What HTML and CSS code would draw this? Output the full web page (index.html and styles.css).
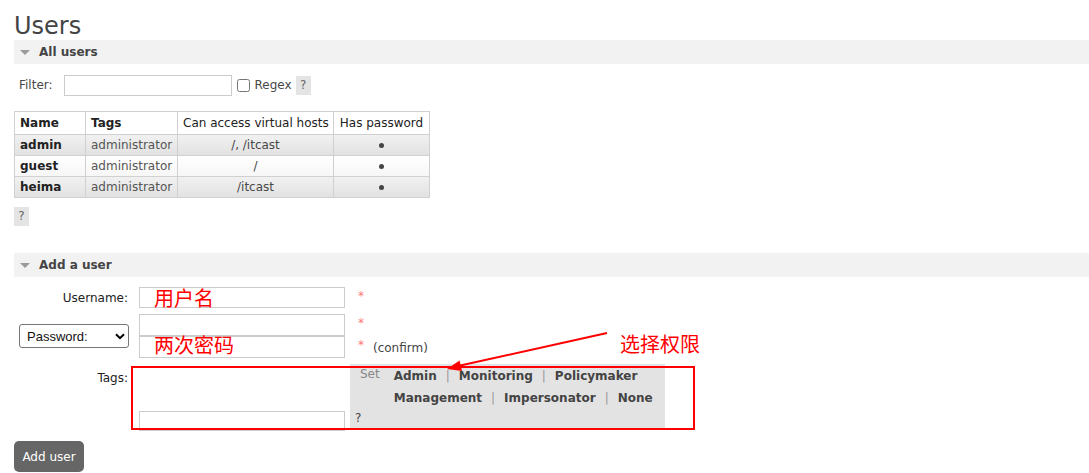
FILE: index.html
```html
<!DOCTYPE html>
<html lang="en">

<head>
    <meta charset="UTF-8">
    <title>Users</title>
    <link rel="stylesheet" href="styles.css">
</head>

<body>
    <div class="page">
        <h1>Users</h1>

        <div class="section">
            <h2 class="section-title"><span class="triangle"></span>All users</h2>
            <div class="filter">
                <label>Filter:</label>
                <input type="text" class="filter-input">
                <input type="checkbox" class="regex-check">
                <label class="regex-label">Regex</label>
                <span class="help">?</span>
            </div>

            <table class="list">
                <colgroup>
                    <col class="col-name">
                    <col class="col-tags">
                    <col class="col-vhosts">
                    <col class="col-pass">
                </colgroup>
                <thead>
                    <tr>
                        <th>Name</th>
                        <th>Tags</th>
                        <th class="c plain">Can access virtual hosts</th>
                        <th class="c plain">Has password</th>
                    </tr>
                </thead>
                <tbody>
                    <tr class="alt1">
                        <td class="user">admin</td>
                        <td class="tag">administrator</td>
                        <td class="c">/, /itcast</td>
                        <td class="c"><span class="dot"></span></td>
                    </tr>
                    <tr class="alt2">
                        <td class="user">guest</td>
                        <td class="tag">administrator</td>
                        <td class="c">/</td>
                        <td class="c"><span class="dot"></span></td>
                    </tr>
                    <tr class="alt1">
                        <td class="user">heima</td>
                        <td class="tag">administrator</td>
                        <td class="c">/itcast</td>
                        <td class="c"><span class="dot"></span></td>
                    </tr>
                </tbody>
            </table>
            <span class="help after-table">?</span>
        </div>

        <div class="section add-section">
            <h2 class="section-title"><span class="triangle"></span>Add a user</h2>
            <div class="user-form">
                <label class="form-label">Username:</label>
                <div class="field-line">
                    <input type="text" class="text-input">
                    <span class="req">*</span>
                </div>

                <div class="select-box">
                    <select>
                        <option>Password:</option>
                    </select>
                    <svg width="10" height="7" viewBox="0 0 10 7">
                        <path d="M1 1.2 L5 5.2 L9 1.2" fill="none" stroke="#000" stroke-width="2" />
                    </svg>
                </div>
                <div class="password-fields">
                    <div class="field-line">
                        <input type="password" class="text-input">
                        <span class="req">*</span>
                    </div>
                    <div class="field-line">
                        <input type="password" class="text-input">
                        <span class="req">*</span>
                        <span class="confirm">(confirm)</span>
                    </div>
                </div>

                <label class="form-label tags-label">Tags:</label>
                <div class="tags-cell">
                    <input type="text" class="text-input tags-input">
                    <div class="tag-help">
                        <div class="tag-set">
                            <span class="set-word">Set</span>
                            <span class="tag-links">
                                <span class="tag-link">Admin</span><span class="sep">|</span><span class="tag-link">Monitoring</span><span class="sep">|</span><span class="tag-link">Policymaker</span>
                                <span class="tag-link">Management</span><span class="sep">|</span><span class="tag-link">Impersonator</span><span class="sep">|</span><span class="tag-link">None</span>
                            </span>
                        </div>
                        <div class="tag-q">?</div>
                    </div>
                </div>
            </div>
            <button class="add-btn">Add user</button>
        </div>
    </div>

    <!-- red notes drawn over the screenshot -->
    <div class="note note-user">用户名</div>
    <div class="note note-pass">两次密码</div>
    <div class="note note-tags">选择权限</div>
    <div class="note-box"></div>
    <svg class="note-arrow" width="1089" height="473" viewBox="0 0 1089 473">
        <line x1="607" y1="333" x2="458" y2="366" stroke="#f00" stroke-width="2" />
        <polygon points="447,369 462,371 459.6,360.6" fill="#f00" />
    </svg>
</body>

</html>
```

FILE: styles.css
```css
body {
    margin: 0;
    font-family: "DejaVu Sans", Verdana, sans-serif;
    font-size: 12px;
    color: #484848;
    position: relative;
    overflow: hidden;
}

.page {
    padding-left: 14px;
}

h1 {
    margin: 13px 0 0 0;
    font-size: 24px;
    line-height: 27px;
    font-weight: normal;
    color: #444;
}

.section-title {
    margin: 0;
    height: 24px;
    display: flex;
    align-items: center;
    background-color: #f2f2f2;
    font-size: 12px;
    font-weight: bold;
    color: #444;
}

.triangle {
    width: 0;
    height: 0;
    border-left: 5px solid transparent;
    border-right: 5px solid transparent;
    border-top: 5px solid #9a9a9a;
    margin: 1px 9px 0 6px;
}

input {
    font-family: "DejaVu Sans", Verdana, sans-serif;
    font-size: 12px;
}

.filter {
    display: flex;
    align-items: center;
    height: 22px;
    margin: 10px 0 0 5px;
}

.filter-input {
    width: 168px;
    height: 21px;
    margin: 0 0 0 11px;
    border: 1px solid #ccc;
    box-sizing: border-box;
}

.regex-check {
    width: 13px;
    height: 13px;
    margin: 0 5px 0 5px;
}

.regex-label {
    margin-right: 4px;
}

.help {
    display: inline-block;
    width: 15px;
    height: 19px;
    line-height: 19px;
    text-align: center;
    background-color: #e4e4e4;
    color: #666;
}

.list {
    border-collapse: collapse;
    table-layout: fixed;
    width: 415px;
    margin-top: 15px;
}

.col-name { width: 71px; }
.col-tags { width: 92px; }
.col-vhosts { width: 156px; }
.col-pass { width: 96px; }

.list th,
.list td {
    border: 1px solid #d0d0d0;
    padding: 3px 5px;
    line-height: 14px;
    text-align: left;
    white-space: nowrap;
}

.list th {
    padding: 4px 5px;
    background-color: #fff;
    color: #222;
}

.list th.plain {
    font-weight: normal;
}

.list .c {
    text-align: center;
}

.list tr.alt1 {
    background: linear-gradient(#f1f1f1, #e1e1e1);
}

.list tr.alt2 {
    background: linear-gradient(#fff, #f6f6f6);
}

.list td.user {
    font-weight: bold;
    color: #222;
}

.list td.tag {
    color: #555;
}

.dot {
    display: inline-block;
    width: 5px;
    height: 5px;
    border-radius: 50%;
    background-color: #444;
    vertical-align: middle;
}

.after-table {
    margin-top: 9px;
}

.add-section {
    margin-top: 27px;
}

.user-form {
    display: grid;
    grid-template-columns: 117px auto;
    column-gap: 8px;
    row-gap: 6px;
    margin-top: 10px;
    align-items: center;
}

.form-label {
    text-align: right;
    padding-right: 3px;
    color: #222;
}

.field-line {
    display: flex;
    align-items: center;
}

.text-input {
    width: 206px;
    height: 21px;
    margin: 0;
    border: 1px solid #ccc;
    box-sizing: border-box;
}

.password-fields .text-input {
    height: 22px;
}

.req {
    color: #f77;
    margin-left: 13px;
    position: relative;
    top: -2px;
}

.confirm {
    margin-left: 9px;
    color: #444;
    position: relative;
    top: 1px;
}

.select-box {
    justify-self: end;
    margin-right: 2px;
    width: 110px;
    height: 24px;
    box-sizing: border-box;
    border: 1px solid #767676;
    border-radius: 3px;
    background-color: #fff;
    display: flex;
    align-items: center;
    padding: 0 3px 0 7px;
}

.select-box select {
    appearance: none;
    -webkit-appearance: none;
    border: none;
    background: none;
    outline: none;
    padding: 0;
    flex: 1;
    font-family: "Liberation Sans", Arial, sans-serif;
    font-size: 13px;
    color: #111;
}

.tags-label {
    align-self: start;
    margin-top: 7px;
}

.tags-cell {
    display: flex;
    align-items: flex-end;
    gap: 5px;
}

.tags-input {
    height: 20px;
    margin-bottom: -2px;
}

.tag-help {
    width: 315px;
    height: 65px;
    box-sizing: border-box;
    background-color: #e3e3e3;
    padding: 1px 0 0 5px;
}

.tag-set {
    display: flex;
    line-height: 22px;
}

.set-word {
    color: #888;
    margin: -2px 14px 0 5px;
}

.tag-links {
    flex: 1;
}

.tag-link {
    font-weight: bold;
    color: #444;
}

.sep {
    color: #999;
    margin: 0 9px;
}

.tag-q {
    line-height: 18px;
    color: #444;
}

.add-btn {
    margin-top: 12px;
    width: 70px;
    height: 31px;
    border: none;
    border-radius: 5px;
    background-color: #666;
    color: #fff;
    font-family: "DejaVu Sans", Verdana, sans-serif;
    font-size: 12px;
    padding: 0;
}

/* annotations on top of the page */
.note {
    position: absolute;
    color: #f00;
    font-family: "Noto Sans CJK SC", sans-serif;
    font-size: 20px;
    line-height: 20px;
}

.note-user {
    left: 154px;
    top: 288px;
}

.note-pass {
    left: 154px;
    top: 335px;
}

.note-tags {
    left: 620px;
    top: 334px;
}

.note-box {
    position: absolute;
    left: 131px;
    top: 366px;
    width: 564px;
    height: 64px;
    box-sizing: border-box;
    border: 2px solid #f00;
}

.note-arrow {
    position: absolute;
    left: 0;
    top: 0;
    pointer-events: none;
}
```
